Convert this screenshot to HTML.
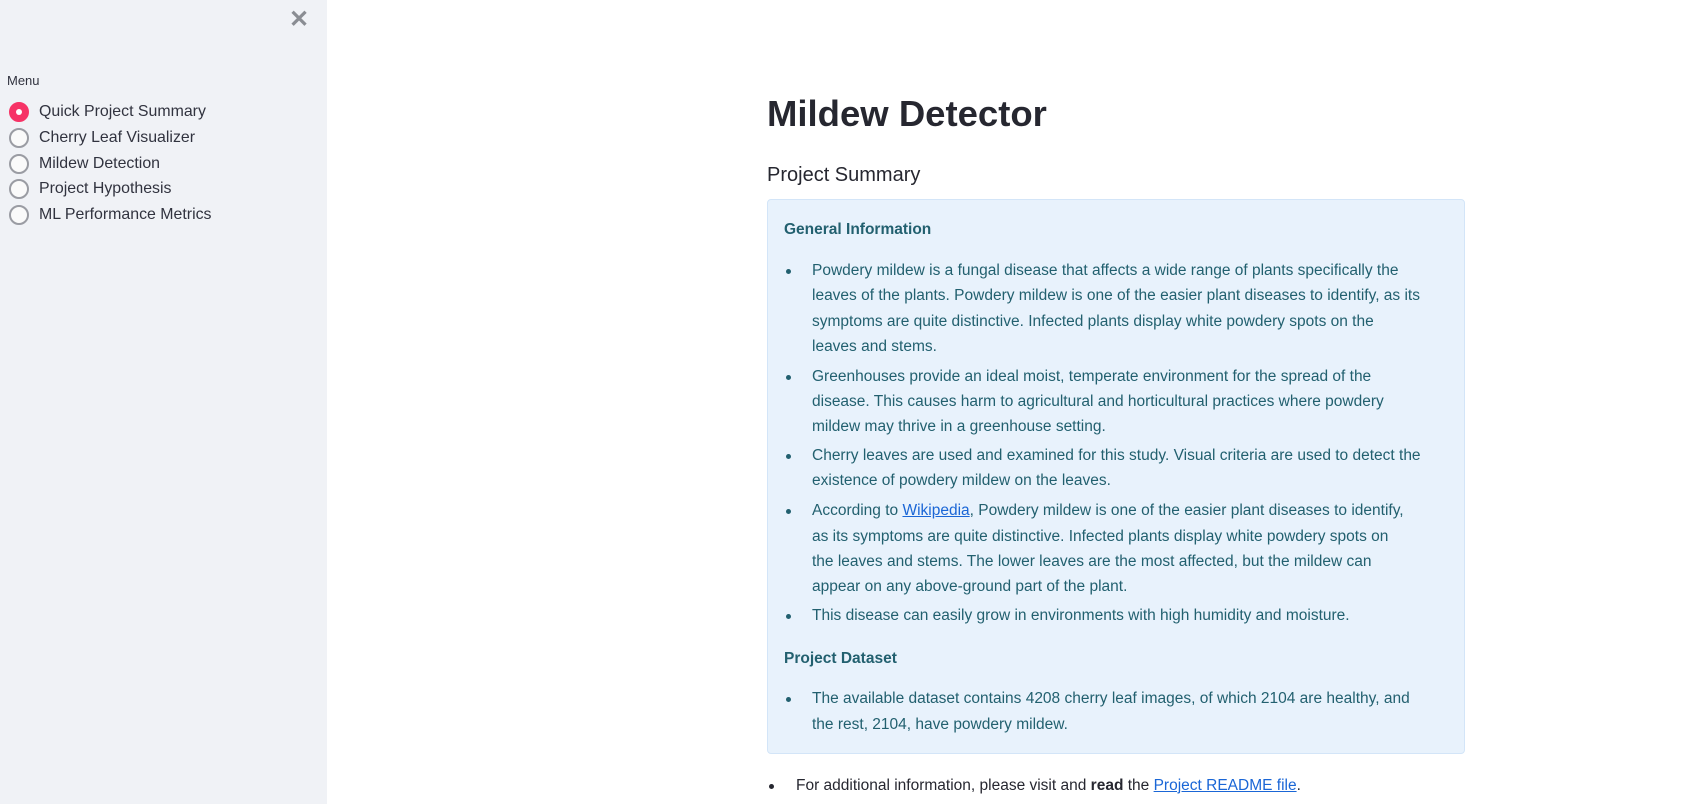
<!DOCTYPE html>
<html><head><meta charset="utf-8">
<style>
*{margin:0;padding:0;box-sizing:border-box}
body{width:1708px;height:804px;overflow:hidden;background:#fff;font-family:"Liberation Sans",sans-serif;color:#262730;position:relative}
#sb{position:absolute;left:0;top:0;width:327px;height:804px;background:#f0f2f6}
.x{position:absolute;left:289px;top:5px;font-size:24px;color:#8a8d93;font-weight:bold}
.menu{position:absolute;left:7px;top:73px;font-size:13px;color:#31333f}
.r{position:absolute;left:9px;width:20px;height:20px;border-radius:50%;border:2px solid #9a9ca3;background:#fafafa}
.r.on{background:#f63366;border-color:#f63366}
.r.on::after{content:"";position:absolute;left:5px;top:5px;width:6px;height:6px;border-radius:50%;background:#fff}
.rl{position:absolute;left:39px;font-size:15.9px;color:#31333f;white-space:nowrap}
h1{position:absolute;left:767px;top:93px;font-size:36.5px;font-weight:bold;color:#262730}
h3{position:absolute;left:767px;top:164px;font-size:20px;font-weight:500;color:#262730}
.box{position:absolute;left:767px;top:199px;width:698px;height:555px;background:#e8f2fc;border:1px solid #d3e5f8;border-radius:4px}
.t{position:absolute;white-space:nowrap;font-size:15.5px;color:#22606f}
.b{font-weight:bold}
.dot{position:absolute;width:5px;height:5px;border-radius:50%;background:#22606f}
a{color:#1a66d6;text-decoration:underline}
</style></head><body>
<div id="sb">
<div class="x">✕</div>
<div class="menu">Menu</div>
<div class="r on" style="top:102px"></div><div class="rl" style="top:103px">Quick Project Summary</div>
<div class="r" style="top:128px"></div><div class="rl" style="top:129px">Cherry Leaf Visualizer</div>
<div class="r" style="top:154px"></div><div class="rl" style="top:155px">Mildew Detection</div>
<div class="r" style="top:179px"></div><div class="rl" style="top:180px">Project Hypothesis</div>
<div class="r" style="top:205px"></div><div class="rl" style="top:206px">ML Performance Metrics</div>
</div>
<h1>Mildew Detector</h1>
<h3>Project Summary</h3>
<div class="box"></div>
<div class="t b" style="left:784px;top:221px">General Information</div>
<div class="dot" style="left:786px;top:269px"></div>
<div class="t" style="left:812px;top:262px">Powdery mildew is a fungal disease that affects a wide range of plants specifically the</div>
<div class="t" style="left:812px;top:287px">leaves of the plants. Powdery mildew is one of the easier plant diseases to identify, as its</div>
<div class="t" style="left:812px;top:313px">symptoms are quite distinctive. Infected plants display white powdery spots on the</div>
<div class="t" style="left:812px;top:338px">leaves and stems.</div>
<div class="dot" style="left:786px;top:375px"></div>
<div class="t" style="left:812px;top:368px">Greenhouses provide an ideal moist, temperate environment for the spread of the</div>
<div class="t" style="left:812px;top:393px">disease. This causes harm to agricultural and horticultural practices where powdery</div>
<div class="t" style="left:812px;top:418px">mildew may thrive in a greenhouse setting.</div>
<div class="dot" style="left:786px;top:454px"></div>
<div class="t" style="left:812px;top:447px">Cherry leaves are used and examined for this study. Visual criteria are used to detect the</div>
<div class="t" style="left:812px;top:472px">existence of powdery mildew on the leaves.</div>
<div class="dot" style="left:786px;top:509px"></div>
<div class="t" style="left:812px;top:502px">According to <a>Wikipedia</a>, Powdery mildew is one of the easier plant diseases to identify,</div>
<div class="t" style="left:812px;top:528px">as its symptoms are quite distinctive. Infected plants display white powdery spots on</div>
<div class="t" style="left:812px;top:553px">the leaves and stems. The lower leaves are the most affected, but the mildew can</div>
<div class="t" style="left:812px;top:578px">appear on any above-ground part of the plant.</div>
<div class="dot" style="left:786px;top:614px"></div>
<div class="t" style="left:812px;top:607px">This disease can easily grow in environments with high humidity and moisture.</div>
<div class="t b" style="left:784px;top:650px">Project Dataset</div>
<div class="dot" style="left:786px;top:697px"></div>
<div class="t" style="left:812px;top:690px">The available dataset contains 4208 cherry leaf images, of which 2104 are healthy, and</div>
<div class="t" style="left:812px;top:716px">the rest, 2104, have powdery mildew.</div>
<div class="dot" style="left:769px;top:784px;background:#262730"></div>
<div class="t" style="left:796px;top:777px;color:#262730">For additional information, please visit and <b>read</b> the <a>Project README file</a>.</div>
</body></html>
